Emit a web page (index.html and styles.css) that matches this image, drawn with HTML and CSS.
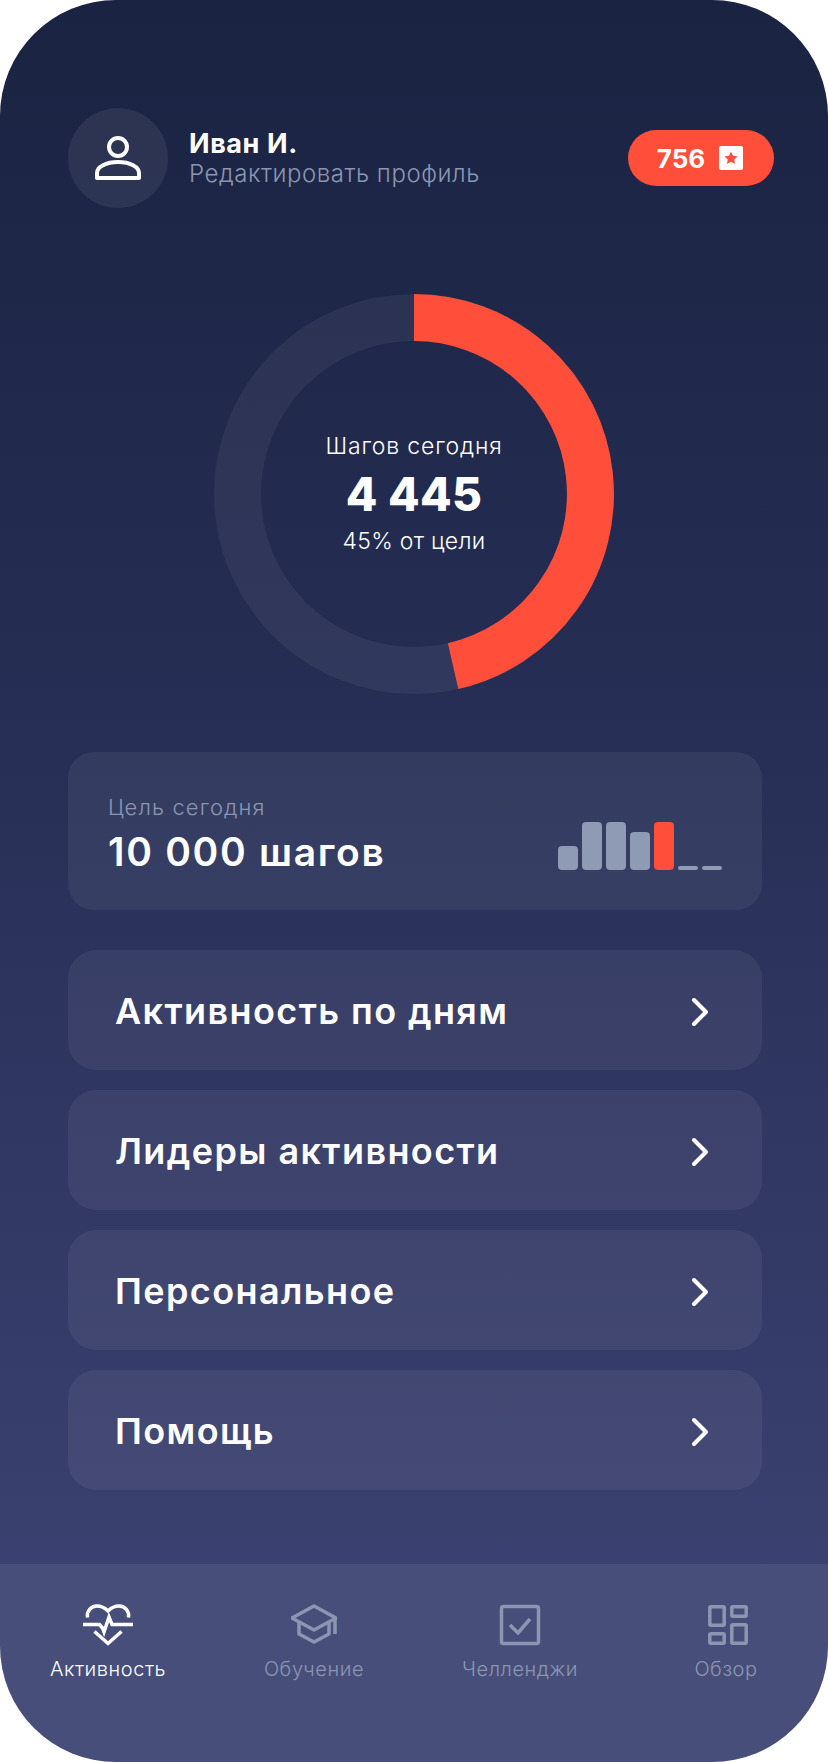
FILE: index.html
```html
<!DOCTYPE html>
<html lang="ru">
<head>
<meta charset="utf-8">
<title>Активность</title>
<link rel="stylesheet" href="styles.css">
</head>
<body>
<main class="phone">
  <header class="profile">
    <div class="avatar">
      <svg class="avatar-icon" viewBox="0 0 46 44" width="46" height="44" fill="none" stroke="#fff" stroke-width="4">
        <circle cx="23" cy="11" r="9"/>
        <path d="M2 42V37C2 31 11 26 23 26S44 31 44 37V42Z" stroke-linejoin="round"/>
      </svg>
    </div>
    <div class="who">
      <div class="name">Иван И.</div>
      <div class="edit">Редактировать профиль</div>
    </div>
    <div class="score">
      <span class="score-num">756</span>
      <span class="score-star">
        <svg viewBox="0 0 24 24" width="24" height="24"><rect width="24" height="24" rx="2" fill="#fff"/><path d="M12 5.6l2 4.2 4.6.6-3.4 3.1.9 4.6-4.1-2.3-4.100 2.300.900-4.600-3.400-3.100 4.600-.600z" fill="#ff4f3b"/></svg>
      </span>
    </div>
  </header>

  <section class="ring">
    <svg class="ring-svg" viewBox="0 0 400 400" width="400" height="400" fill="none">
      <circle cx="200" cy="200" r="176.500" stroke="#fff" stroke-opacity=".055" stroke-width="47"/>
      <path d="M200 23.500A176.500 176.500 0 0 1 239.100 372.100" stroke="#ff4f3b" stroke-width="47"/>
    </svg>
    <div class="ring-text">
      <div class="ring-label">Шагов сегодня</div>
      <div class="ring-value">4 445</div>
      <div class="ring-sub">45% от цели</div>
    </div>
  </section>

  <section class="goal">
    <div class="goal-text">
      <div class="goal-label">Цель сегодня</div>
      <div class="goal-value">10 000 шагов</div>
    </div>
    <div class="bars">
      <i class="bar h24"></i><i class="bar h48"></i><i class="bar h48"></i><i class="bar h38"></i><i class="bar h48 now"></i><i class="bar h4"></i><i class="bar h4"></i>
    </div>
  </section>

  <nav class="menu">
    <a class="row"><span>Активность по дням</span><svg class="chev" viewBox="0 0 20 30" width="20" height="30" fill="none" stroke="#fff" stroke-width="4" stroke-linecap="round" stroke-linejoin="round"><path d="M4 3l12 12L4 27"/></svg></a>
    <a class="row"><span>Лидеры активности</span><svg class="chev" viewBox="0 0 20 30" width="20" height="30" fill="none" stroke="#fff" stroke-width="4" stroke-linecap="round" stroke-linejoin="round"><path d="M4 3l12 12L4 27"/></svg></a>
    <a class="row"><span>Персональное</span><svg class="chev" viewBox="0 0 20 30" width="20" height="30" fill="none" stroke="#fff" stroke-width="4" stroke-linecap="round" stroke-linejoin="round"><path d="M4 3l12 12L4 27"/></svg></a>
    <a class="row"><span>Помощь</span><svg class="chev" viewBox="0 0 20 30" width="20" height="30" fill="none" stroke="#fff" stroke-width="4" stroke-linecap="round" stroke-linejoin="round"><path d="M4 3l12 12L4 27"/></svg></a>
  </nav>

  <footer class="tabs">
    <a class="tab active">
      <svg viewBox="0 0 50 42" width="50" height="42" fill="none" stroke="currentColor" stroke-width="3.500">
        <path d="M4.500 13.500C3.500 7 8 2 14 2c4.500 0 8 2 11 5 3-3 6.500-5 11-5 6 0 10.500 5 9.500 11.500"/>
        <path d="M0 20.500h16.500l3 3.500 1.500 4 5-15 3 7.500H50"/>
        <path d="M11.500 27.500L25 39.500 38.500 27.500"/>
      </svg>
      <span>Активность</span>
    </a>
    <a class="tab">
      <svg viewBox="0 0 46 42" width="46" height="42" fill="none" stroke="currentColor" stroke-width="3.500" stroke-linejoin="round">
        <path d="M1 14L23 2 45 14 23 26Z"/>
        <path d="M8 18V30L23 38 38 30V18"/>
        <path d="M44 14V30"/>
      </svg>
      <span>Обучение</span>
    </a>
    <a class="tab">
      <svg viewBox="0 0 42 42" width="42" height="42" fill="none" stroke="currentColor" stroke-width="3.500">
        <rect x="2.500" y="2.500" width="37" height="37" rx="2"/>
        <path d="M11 21l8 8 12-14"/>
      </svg>
      <span>Челленджи</span>
    </a>
    <a class="tab tab-last">
      <svg viewBox="0 0 42 42" width="42" height="42" fill="none" stroke="currentColor" stroke-width="3.500">
        <rect x="2.800" y="2.800" width="14.400" height="18.400" rx="1"/>
        <rect x="24.800" y="2.800" width="14.400" height="9.400" rx="1"/>
        <rect x="2.800" y="29.800" width="14.400" height="9.400" rx="1"/>
        <rect x="24.800" y="20.800" width="14.400" height="18.400" rx="1"/>
      </svg>
      <span>Обзор</span>
    </a>
  </footer>
</main>
</body>
</html>
```

FILE: styles.css
```css
* { box-sizing: border-box; }

html, body {
  margin: 0;
  background: #fff;
}

body {
  font-family: Inter, "Open Sans", "Liberation Sans", sans-serif;
  color: #fff;
}

.phone {
  width: 828px;
  height: 1762px;
  border-radius: 116px;
  overflow: hidden;
  display: flex;
  flex-direction: column;
  background: linear-gradient(180deg, #1a2341 0%, #242c52 35%, #3b4170 90%, #3b4170 100%);
}

/* Profile header */
.profile {
  display: flex;
  align-items: center;
  margin-top: 108px;
  padding: 0 54px 0 68px;
  height: 100px;
}

.avatar {
  width: 100px;
  height: 100px;
  border-radius: 50%;
  background: rgba(255, 255, 255, .07);
  display: flex;
  align-items: center;
  justify-content: center;
}

.who {
  margin-left: 21px;
  padding-top: 2px;
  flex: 1;
}

.name {
  font-size: 27px;
  font-weight: 700;
  line-height: 30px;
  letter-spacing: .6px;
}

.edit {
  font-size: 24px;
  font-weight: 300;
  line-height: 30px;
  color: #8b97b2;
  letter-spacing: .55px;
}

.score {
  width: 146px;
  height: 56px;
  padding-right: 2px;
  border-radius: 28px;
  background: #ff4f3b;
  display: flex;
  align-items: center;
  justify-content: center;
  gap: 14px;
}

.score-num {
  font-size: 26px;
  font-weight: 700;
}

.score-star {
  display: flex;
}

/* Ring */
.ring {
  position: relative;
  width: 400px;
  height: 400px;
  margin: 86px auto 0;
}

.ring-svg {
  display: block;
}

.ring-text {
  position: absolute;
  inset: 0;
  display: flex;
  flex-direction: column;
  align-items: center;
  justify-content: center;
  text-align: center;
  padding-bottom: 2px;
}

.ring-label {
  font-size: 23px;
  font-weight: 300;
  line-height: 40px;
  letter-spacing: .85px;
}

.ring-value {
  font-size: 46px;
  font-weight: 800;
  line-height: 56px;
  letter-spacing: .3px;
}

.ring-sub {
  font-size: 23px;
  font-weight: 300;
  line-height: 38px;
  letter-spacing: .3px;
}

/* Goal card */
.goal {
  margin: 58px 66px 0 68px;
  height: 158px;
  border-radius: 26px;
  background: rgba(255, 255, 255, .06);
  display: flex;
  align-items: center;
  justify-content: space-between;
  padding: 0 40px;
}

.goal-text {
  padding-top: 6px;
}

.goal-label {
  font-size: 22px;
  font-weight: 300;
  line-height: 26px;
  color: #8b97b2;
  letter-spacing: 1.100px;
}

.goal-value {
  font-size: 39px;
  font-weight: 600;
  line-height: 46px;
  margin-top: 9px;
  letter-spacing: 1.700px;
}

.bars {
  display: flex;
  align-items: flex-end;
  gap: 4px;
  margin-top: 30px;
}

.bar {
  width: 20px;
  border-radius: 4px;
  background: #8f9ab4;
}

.bar.now { background: #ff4f3b; }
.h4 { height: 4px; border-radius: 2px; }
.h24 { height: 24px; }
.h38 { height: 38px; }
.h48 { height: 48px; }

/* Menu */
.menu {
  display: flex;
  flex-direction: column;
  gap: 20px;
  margin: 40px 66px 0 68px;
}

.row {
  height: 120px;
  padding: 2px 52px 0 47px;
  border-radius: 28px;
  background: rgba(255, 255, 255, .06);
  display: flex;
  align-items: center;
  justify-content: space-between;
  font-size: 36px;
  font-weight: 600;
  letter-spacing: 1.400px;
}

.chev {
  margin-top: 2px;
}

/* Tabs */
.tabs {
  margin-top: auto;
  height: 198px;
  background: rgba(255, 255, 255, .07);
  display: grid;
  grid-template-columns: repeat(4, 206px);
  padding: 40px 0 0 5px;
  align-content: start;
}

.tab {
  display: flex;
  flex-direction: column;
  align-items: center;
  gap: 11px;
  color: #8b97b2;
  font-size: 20px;
  font-weight: 300;
  letter-spacing: .55px;
}

.tab.active { color: #fff; }
.tab svg { display: block; }
.tab-last svg { margin-left: 4px; }
```
